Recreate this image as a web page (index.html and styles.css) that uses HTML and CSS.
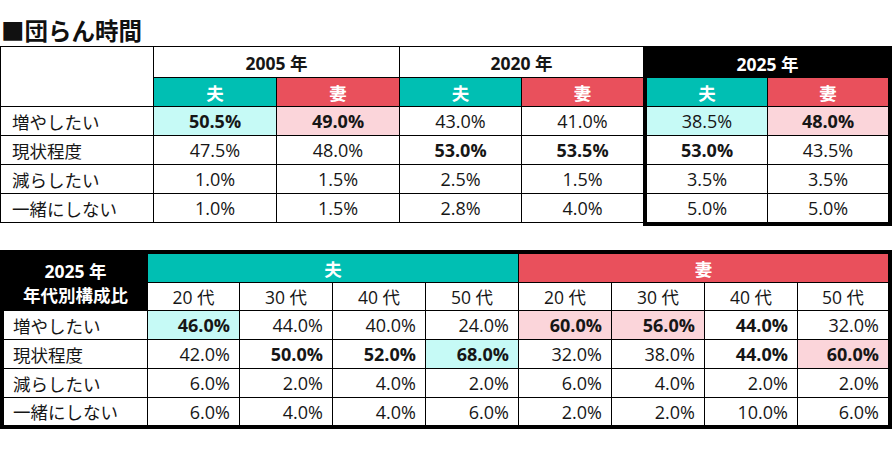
FILE: index.html
```html
<!DOCTYPE html>
<html lang="ja">
<head>
<meta charset="utf-8">
<link rel="stylesheet" href="styles.css">
</head>
<body>
<div class="page">
  <h1 class="title">■団らん時間</h1>

  <div class="top">
    <div class="grid-left">
      <div class="cell blank span-r2"></div>
      <div class="cell year span-c2">2005 年</div>
      <div class="cell year span-c2">2020 年</div>
      <div class="cell hd m">夫</div>
      <div class="cell hd f">妻</div>
      <div class="cell hd m">夫</div>
      <div class="cell hd f">妻</div>

      <div class="cell label">増やしたい</div>
      <div class="cell num b hm">50.5%</div>
      <div class="cell num b hf">49.0%</div>
      <div class="cell num">43.0%</div>
      <div class="cell num">41.0%</div>

      <div class="cell label">現状程度</div>
      <div class="cell num">47.5%</div>
      <div class="cell num">48.0%</div>
      <div class="cell num b">53.0%</div>
      <div class="cell num b">53.5%</div>

      <div class="cell label">減らしたい</div>
      <div class="cell num">1.0%</div>
      <div class="cell num">1.5%</div>
      <div class="cell num">2.5%</div>
      <div class="cell num">1.5%</div>

      <div class="cell label">一緒にしない</div>
      <div class="cell num">1.0%</div>
      <div class="cell num">1.5%</div>
      <div class="cell num">2.8%</div>
      <div class="cell num">4.0%</div>
    </div>

    <div class="grid-2025">
      <div class="cell year dark span-c2">2025 年</div>
      <div class="cell hd m">夫</div>
      <div class="cell hd f">妻</div>
      <div class="cell num hm">38.5%</div>
      <div class="cell num b hf">48.0%</div>
      <div class="cell num b">53.0%</div>
      <div class="cell num">43.5%</div>
      <div class="cell num">3.5%</div>
      <div class="cell num">3.5%</div>
      <div class="cell num">5.0%</div>
      <div class="cell num">5.0%</div>
    </div>
  </div>

  <div class="bottom">
    <div class="cell corner span-r2"><span>2025 年</span><span>年代別構成比</span></div>
    <div class="cell hd m span-c4">夫</div>
    <div class="cell hd f span-c4">妻</div>
    <div class="cell age">20 代</div>
    <div class="cell age">30 代</div>
    <div class="cell age">40 代</div>
    <div class="cell age">50 代</div>
    <div class="cell age">20 代</div>
    <div class="cell age">30 代</div>
    <div class="cell age">40 代</div>
    <div class="cell age">50 代</div>

    <div class="cell label">増やしたい</div>
    <div class="cell rnum b hm">46.0%</div>
    <div class="cell rnum">44.0%</div>
    <div class="cell rnum">40.0%</div>
    <div class="cell rnum">24.0%</div>
    <div class="cell rnum b hf">60.0%</div>
    <div class="cell rnum b hf">56.0%</div>
    <div class="cell rnum b">44.0%</div>
    <div class="cell rnum">32.0%</div>

    <div class="cell label">現状程度</div>
    <div class="cell rnum">42.0%</div>
    <div class="cell rnum b">50.0%</div>
    <div class="cell rnum b">52.0%</div>
    <div class="cell rnum b hm">68.0%</div>
    <div class="cell rnum">32.0%</div>
    <div class="cell rnum">38.0%</div>
    <div class="cell rnum b">44.0%</div>
    <div class="cell rnum b hf">60.0%</div>

    <div class="cell label">減らしたい</div>
    <div class="cell rnum">6.0%</div>
    <div class="cell rnum">2.0%</div>
    <div class="cell rnum">4.0%</div>
    <div class="cell rnum">2.0%</div>
    <div class="cell rnum">6.0%</div>
    <div class="cell rnum">4.0%</div>
    <div class="cell rnum">2.0%</div>
    <div class="cell rnum">2.0%</div>

    <div class="cell label">一緒にしない</div>
    <div class="cell rnum">6.0%</div>
    <div class="cell rnum">4.0%</div>
    <div class="cell rnum">4.0%</div>
    <div class="cell rnum">6.0%</div>
    <div class="cell rnum">2.0%</div>
    <div class="cell rnum">2.0%</div>
    <div class="cell rnum">10.0%</div>
    <div class="cell rnum">6.0%</div>
  </div>
</div>
</body>
</html>
```

FILE: styles.css
```css
* { box-sizing: border-box; }

html, body {
  margin: 0;
  padding: 0;
  background: #ffffff;
}

body {
  width: 892px;
  height: 465px;
  overflow: hidden;
  font-family: "Open Sans", "Noto Sans CJK JP", sans-serif;
  color: #161616;
}

.page {
  display: flex;
  flex-direction: column;
}

.title {
  margin: 0 0 2px 0;
  padding: 16px 0 0 1px;
  font-family: "Noto Sans CJK JP", sans-serif;
  font-size: 23.5px;
  line-height: 28px;
  font-weight: 700;
  color: #111;
}

.top {
  display: flex;
  align-items: flex-start;
}

.grid-left {
  display: grid;
  grid-template-columns: 152px 122px 122px 121px 121px;
  grid-template-rows: 30px 28px 28px 28px 28px 28px;
  gap: 1px;
  padding: 1px 0 1px 1px;
  background: #000;
}

.grid-2025 {
  display: grid;
  grid-template-columns: 120px 120px;
  grid-template-rows: 27px 28px 28px 28px 28px 28px;
  gap: 1px;
  border: 4px solid #000;
  background: #000;
}

.cell {
  background: #fff;
  display: flex;
  align-items: center;
  justify-content: center;
  font-size: 18px;
  white-space: nowrap;
}

.span-r2 { grid-row: span 2; }
.span-c2 { grid-column: span 2; }
.span-c4 { grid-column: span 4; }

.year {
  font-weight: 700;
  font-size: 17.5px;
}

.year.dark {
  background: #000;
  color: #fff;
}

.hd {
  color: #fff;
  font-weight: 700;
  font-family: "Noto Sans CJK JP", sans-serif;
  font-size: 17.5px;
}

.m { background: #00bfb3; }
.f { background: #e9505c; }

.hm { background: #c6faf6; }
.hf { background: #fbd5da; }

.b { font-weight: 700; }

.label {
  justify-content: flex-start;
  padding-left: 11px;
  font-family: "Noto Sans CJK JP", sans-serif;
  font-size: 17.5px;
}

.num {
  font-size: 18px;
}

.bottom {
  margin-top: 24px;
  display: grid;
  grid-template-columns: 143px 91px repeat(6, 92px) 90px;
  grid-template-rows: 28px 27px 28px 28px 28px 27px;
  gap: 1px;
  border: 4px solid #000;
  background: #000;
  width: 892px;
}

.corner {
  background: #000;
  color: #fff;
  flex-direction: column;
  text-align: center;
  font-weight: 700;
  font-size: 17.5px;
  line-height: 24px;
  padding-top: 2px;
}

.bottom .label {
  padding-left: 9px;
}

.age {
  font-size: 17.5px;
}

.rnum {
  justify-content: flex-end;
  padding-right: 9px;
  font-size: 18px;
}
```
